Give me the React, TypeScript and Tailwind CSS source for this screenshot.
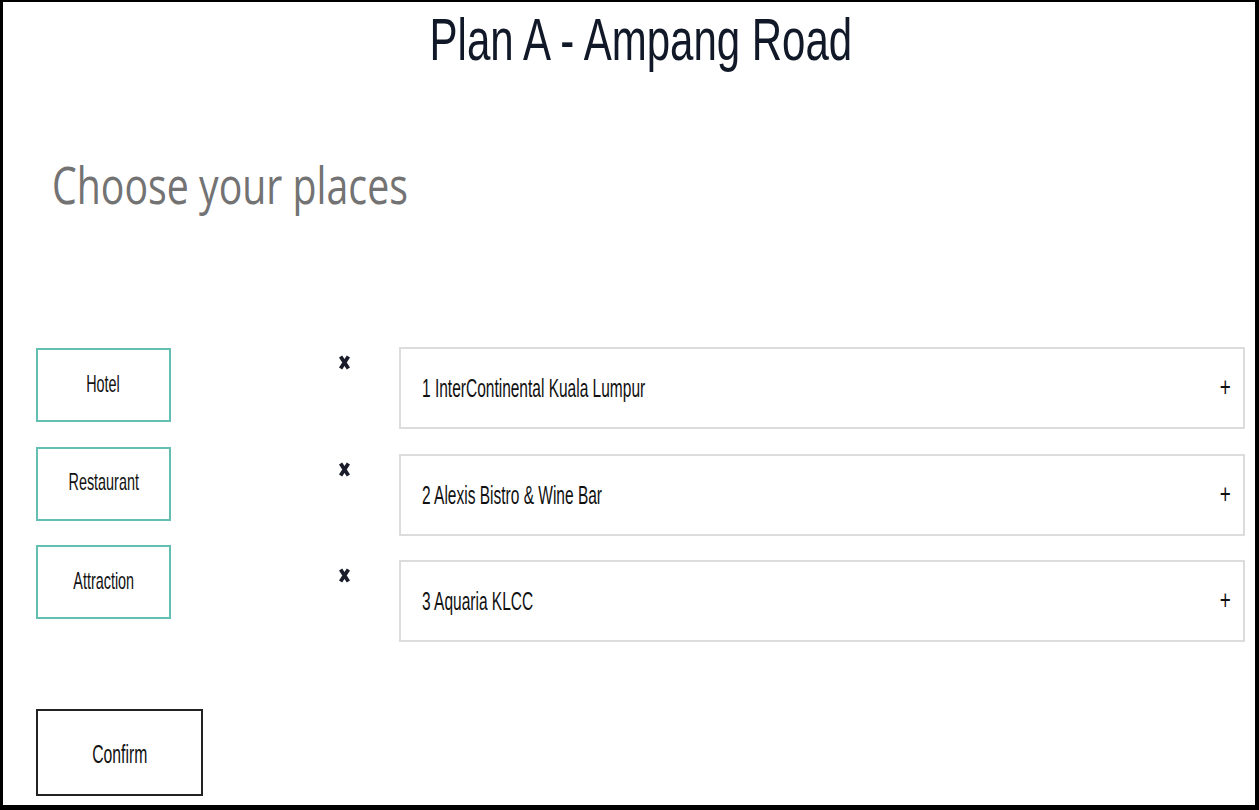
const categories = ["Hotel", "Restaurant", "Attraction"];

const places = [
  "1 InterContinental Kuala Lumpur",
  "2 Alexis Bistro & Wine Bar",
  "3 Aquaria KLCC",
];

function RemoveMark() {
  return (
    <svg width="11" height="15" viewBox="0 0 11 15" className="block">
      <path d="M1.6 1.4 L9.4 13.6 M9.4 1.4 L1.6 13.6" stroke="#1b1c2b" strokeWidth="3.8" strokeLinecap="butt" fill="none" />
    </svg>
  );
}

export default function App() {
  return (
    <div className="box-border h-[810px] w-[1259px] overflow-hidden border-t-2 border-r-4 border-b-[5px] border-l-[3px] border-black bg-white font-['Liberation_Sans',Arial,sans-serif]">
      <h1 className="flex justify-center pt-[8px] pl-[23px] text-[60px] leading-none font-normal text-[#111827]">
        <span className="inline-block origin-center scale-x-[0.7] whitespace-nowrap">Plan A - Ampang Road</span>
      </h1>

      <h2 className="mt-[88px] pl-[49px] font-['Open_Sans',sans-serif] text-[52px] leading-none font-normal text-[#737373]">
        <span className="inline-block origin-left scale-x-[0.755] whitespace-nowrap">Choose your places</span>
      </h2>

      <div className="mt-[137px] flex pl-[33px] pr-[10px]">
        <div className="flex w-[135px] flex-col gap-[24.5px] pt-[1px]">
          {categories.map((c) => (
            <button
              key={c}
              type="button"
              className="flex h-[74px] w-[135px] items-center justify-center border-2 border-[#62bfb1] bg-white pb-[3px] text-[24px] leading-none text-[#111]"
            >
              <span className="inline-block origin-center scale-x-[0.6] whitespace-nowrap">{c}</span>
            </button>
          ))}
        </div>

        <div className="flex flex-1 flex-col gap-[24.5px]">
          {places.map((p) => (
            <div key={p} className="flex items-start">
              <div className="w-[228px] pt-[8px] pl-[168px]">
                <RemoveMark />
              </div>
              <div className="flex h-[82px] flex-1 items-start justify-between border-2 border-[#dcdcdc] pl-[21px] pr-[12px] text-[25px] leading-none text-[#111]">
                <span className="mt-[27px] inline-block origin-left scale-x-[0.62] whitespace-nowrap">{p}</span>
                <span className="mt-[25px] inline-block origin-right scale-x-[0.7] text-[27px]">+</span>
              </div>
            </div>
          ))}
        </div>
      </div>

      <div className="mt-[67px] pl-[33px]">
        <button
          type="button"
          className="flex h-[87px] w-[167px] items-start justify-center border-2 border-[#222] bg-white pt-[31px] text-[25px] leading-none text-[#111]"
        >
          <span className="inline-block origin-center scale-x-[0.63] whitespace-nowrap">Confirm</span>
        </button>
      </div>
    </div>
  );
}
